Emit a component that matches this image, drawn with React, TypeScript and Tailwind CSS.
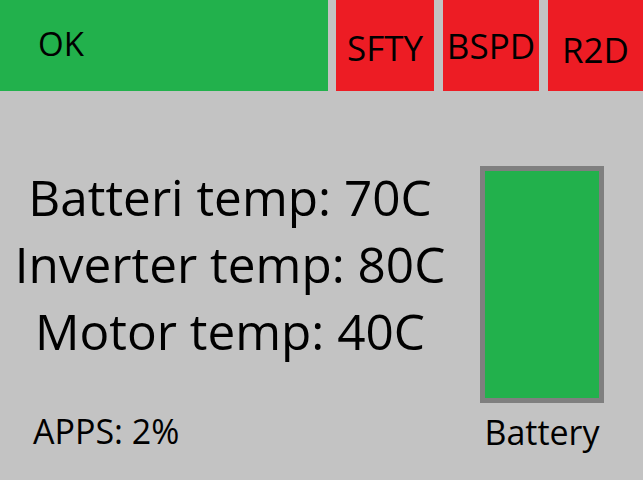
export default function App() {
  return (
    <div className="w-[643px] h-[480px] bg-[#c3c3c3] text-black font-['Open_Sans',sans-serif] overflow-hidden">
      {/* Status bar */}
      <div className="flex h-[91px] leading-none">
        <div className="w-[328px] bg-[#22b14c] pl-[38px] pt-[27px] text-[33px]">OK</div>
        <div className="ml-[8px] w-[98px] bg-[#ed1c24] flex justify-center pt-[30px] text-[35px]">SFTY</div>
        <div className="ml-[9px] w-[96px] bg-[#ed1c24] flex justify-center pt-[28px] text-[35px]">BSPD</div>
        <div className="ml-[9px] flex-1 bg-[#ed1c24] flex justify-center pt-[32px] text-[35px]">R2D</div>
      </div>

      <div className="flex">
        {/* Temps */}
        <div className="w-[460px] flex flex-col">
          <div className="flex flex-col items-center pt-[73px] text-[49.5px] leading-[67px]">
            <span>Batteri temp: 70C</span>
            <span>Inverter temp: 80C</span>
            <span>Motor temp: 40C</span>
          </div>
          <div className="pl-[33px] mt-[49px] text-[34px] leading-none">APPS: 2%</div>
        </div>

        {/* Battery */}
        <div className="flex flex-col items-center w-[124px] ml-[20px] pt-[75px]">
          <div className="w-[124px] h-[237px] border-[5px] border-[#7f7f7f] bg-[#22b14c]" />
          <div className="mt-[12px] text-[34px] leading-none">Battery</div>
        </div>
      </div>
    </div>
  );
}
